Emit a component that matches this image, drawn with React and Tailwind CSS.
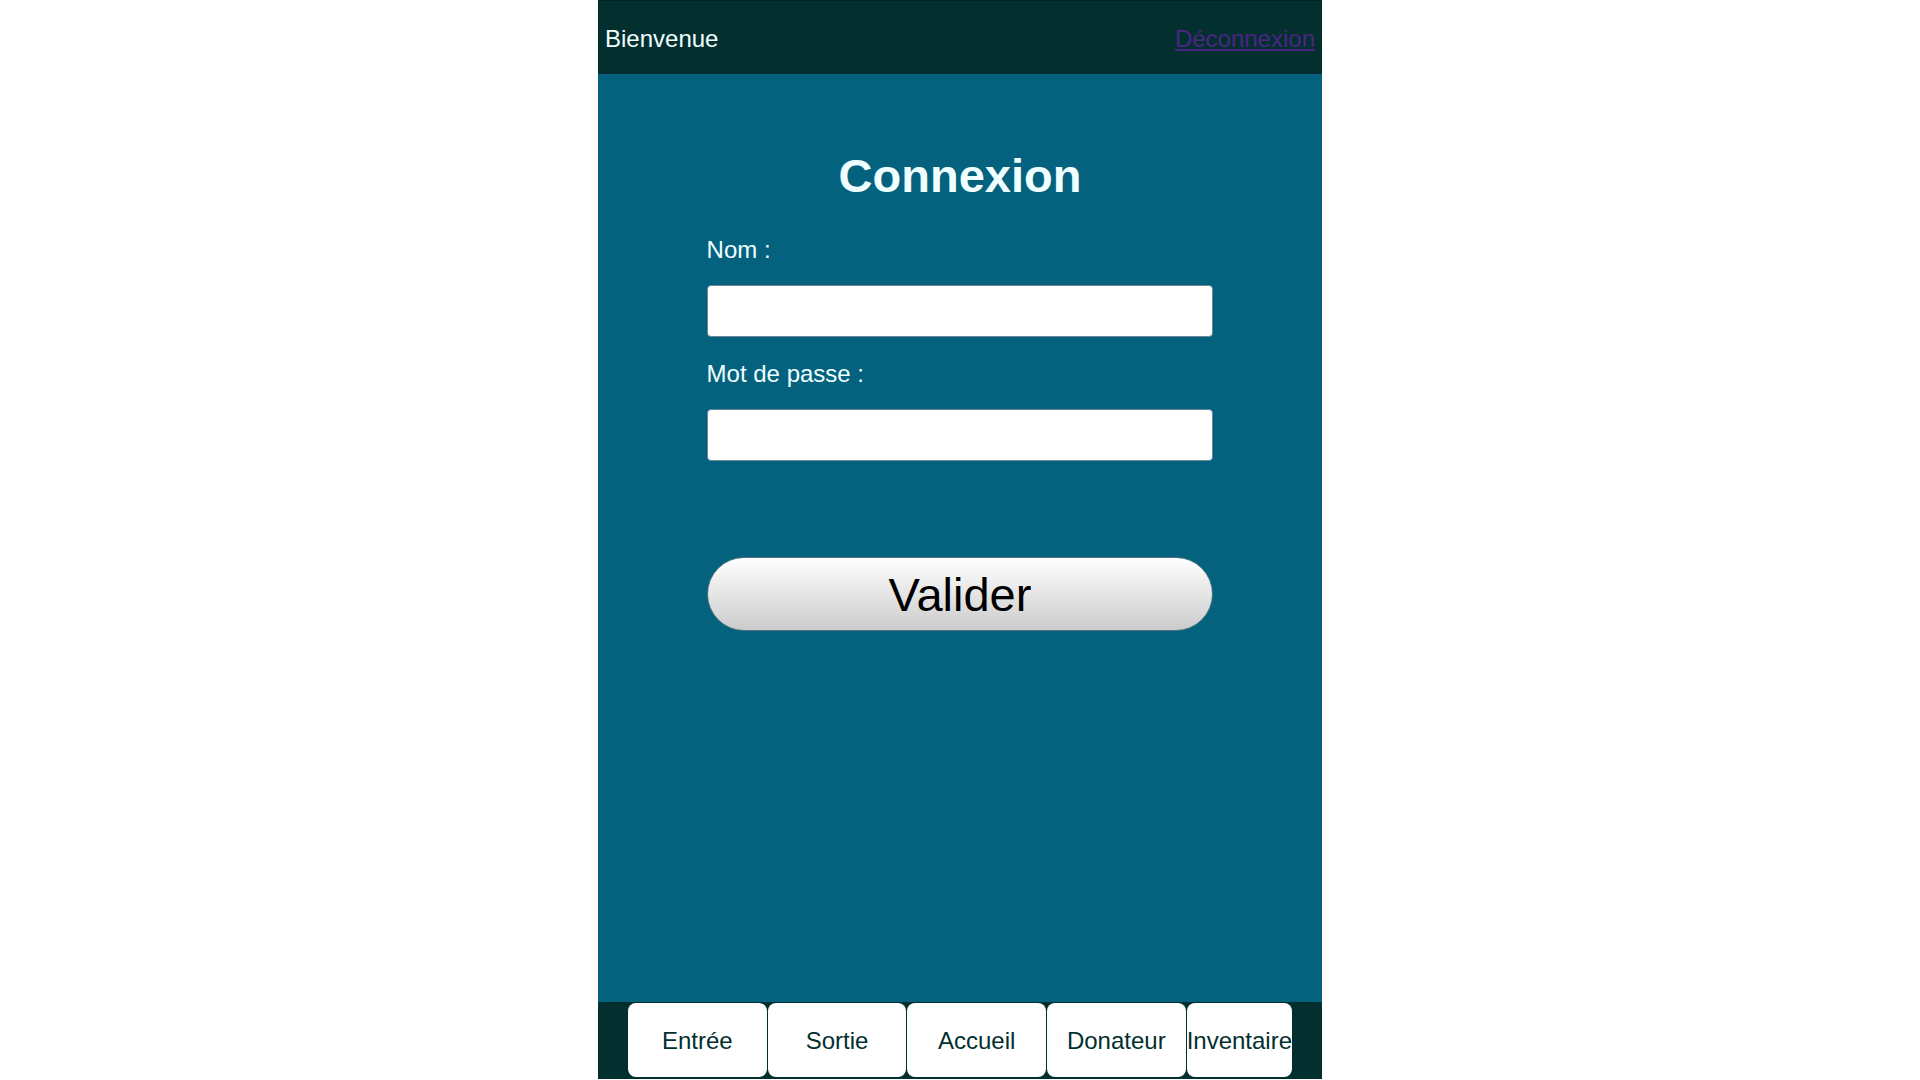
const tabs = ['Entrée', 'Sortie', 'Accueil', 'Donateur'];
const tabClass = 'flex h-[74px] items-center justify-center rounded-lg bg-white pt-0.5';

function Field({ id, label, type }) {
  return (
    <div className="flex flex-col gap-[21px]">
      <label htmlFor={id} className="leading-7">{label}</label>
      <input
        id={id}
        name={id}
        type={type}
        className="h-[52px] w-full rounded border border-[#6a8796] bg-white px-3 text-black"
      />
    </div>
  );
}

export default function App() {
  return (
    <div className="min-h-screen bg-white pb-px font-['Liberation_Sans',Arial,sans-serif] text-2xl">
      <div className="mx-auto flex min-h-[calc(100vh-1px)] w-full max-w-[724px] flex-col bg-[#04627f] text-[#f0ffff]">
        <header className="flex h-[74px] items-center justify-between border-t border-[#022028] bg-[#032f2f] px-[7px] pt-0.5">
          <span>Bienvenue</span>
          <a href="#deconnexion" className="text-[#4b2584] underline">Déconnexion</a>
        </header>

        <main className="flex-1 px-[15%] pt-[74px]">
          <h1 className="text-center text-[47px] font-bold leading-[56px]">Connexion</h1>
          <form className="mt-8 flex flex-col gap-[23px]" onSubmit={(e) => e.preventDefault()}>
            <Field id="nom" label="Nom :" type="text" />
            <Field id="mot-de-passe" label="Mot de passe :" type="password" />
            <button
              type="submit"
              className="mt-[73px] h-[74px] w-full rounded-full border border-[#4d7380] bg-linear-to-b from-white to-[#cccccc] text-[47px] leading-none text-black"
            >
              Valider
            </button>
          </form>
        </main>

        <nav className="flex gap-px bg-[#032f2f] px-[30px] pb-0.5 pt-px text-[#032f2f]">
          {tabs.map((tab) => (
            <a key={tab} href={'#' + tab.toLowerCase()} className={tabClass + ' flex-1'}>
              {tab}
            </a>
          ))}
          <a href="#inventaire" className={tabClass}>Inventaire</a>
        </nav>
      </div>
    </div>
  );
}
